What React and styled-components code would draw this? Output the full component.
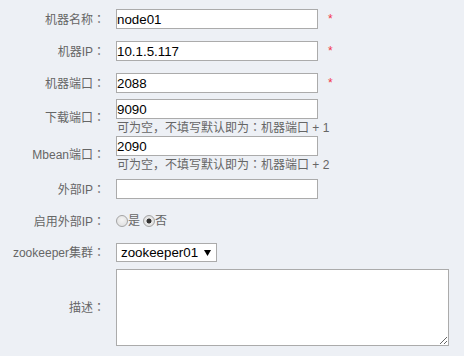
import React from "react";
import styled, { createGlobalStyle } from "styled-components";

const Global = createGlobalStyle`
  html, body { margin: 0; padding: 0; background: #edf0f5; }
  body { font-family: "Liberation Sans", "Noto Sans CJK SC", sans-serif; }
`;

const Form = styled.div`
  padding-top: 9px;
  width: 464px;
  height: 356px;
  box-sizing: border-box;
`;

const Row = styled.div`
  display: flex;
  align-items: center;
  margin-top: ${(p) => p.$mt || 0}px;
`;

const Label = styled.div`
  width: 105px;
  flex-shrink: 0;
  margin-right: 11px;
  text-align: right;
  font-size: 12px;
  line-height: 16px;
  color: #666;
  white-space: nowrap;
`;

const Colon = styled.span`
  font-family: "Noto Sans CJK JP", "Noto Sans CJK SC", sans-serif;
`;

const Field = styled.div`
  display: flex;
  flex-direction: column;
`;

const InputLine = styled.div`
  display: flex;
  align-items: center;
`;

const TextInput = styled.input`
  width: 202px;
  height: 20px;
  box-sizing: border-box;
  margin: 0;
  padding: 0 1px 0 0;
  border: 1px solid #ababab;
  background: #fff;
  color: #000;
  font-family: "Liberation Sans", Arial, sans-serif;
  font-size: 13.33px;
  outline: none;
`;

const Required = styled.span`
  margin-left: 10px;
  padding-bottom: 1px;
  color: #f2364a;
  font-size: 12px;
  line-height: 16px;
`;

const Hint = styled.div`
  font-size: 12px;
  line-height: 16px;
  color: #666;
  padding-left: 1px;
  white-space: nowrap;
`;

const Radios = styled.div`
  display: flex;
  align-items: center;
  height: 20px;
  font-size: 12px;
  color: #666;
`;

const Radio = styled.input.attrs({ type: "radio" })`
  appearance: none;
  -webkit-appearance: none;
  width: 12px;
  height: 12px;
  box-sizing: border-box;
  margin: 0 0 0 ${(p) => p.$ml || 0}px;
  border-radius: 50%;
  border: 1px solid #a4a4a4;
  background: radial-gradient(circle at 50% 40%, #f4f4f4 0%, #dcdcdc 100%);
  &:checked {
    background: radial-gradient(circle, #333 0, #333 2.2px, #e9e9e9 2.8px, #d6d6d6 100%);
  }
`;

const RadioText = styled.span`
  line-height: 16px;
`;

const SelectBox = styled.div`
  width: 101px;
  height: 19px;
  box-sizing: border-box;
  border: 1px solid #ababab;
  background: #fff;
  display: flex;
  align-items: center;
  justify-content: space-between;
  padding: 0 5px 0 4px;
  font-family: "Liberation Sans", Arial, sans-serif;
  font-size: 13.33px;
  color: #000;
`;

const TextArea = styled.textarea`
  width: 333px;
  height: 77px;
  box-sizing: border-box;
  margin: 0;
  padding: 0;
  border: 1px solid #ababab;
  background: #fff;
  font-family: "Liberation Sans", Arial, sans-serif;
  font-size: 13.33px;
  outline: none;
  display: block;
`;

function Arrow() {
  return (
    <svg width="7" height="6" viewBox="0 0 7 6">
      <polygon points="0,0 7,0 3.5,6" fill="#000" />
    </svg>
  );
}

const C = () => <Colon>：</Colon>;

export default function App() {
  return (
    <>
      <Global />
      <Form>
        <Row>
          <Label>机器名称<C /></Label>
          <InputLine>
            <TextInput defaultValue="node01" />
            <Required>*</Required>
          </InputLine>
        </Row>
        <Row $mt={12}>
          <Label>机器IP<C /></Label>
          <InputLine>
            <TextInput defaultValue="10.1.5.117" />
            <Required>*</Required>
          </InputLine>
        </Row>
        <Row $mt={12}>
          <Label>机器端口<C /></Label>
          <InputLine>
            <TextInput defaultValue="2088" />
            <Required>*</Required>
          </InputLine>
        </Row>
        <Row $mt={6}>
          <Label>下载端口<C /></Label>
          <Field>
            <TextInput defaultValue="9090" />
            <Hint>可为空，不填写默认即为<C />机器端口 + 1</Hint>
          </Field>
        </Row>
        <Row>
          <Label>Mbean端口<C /></Label>
          <Field>
            <TextInput defaultValue="2090" />
            <Hint>可为空，不填写默认即为<C />机器端口 + 2</Hint>
          </Field>
        </Row>
        <Row $mt={6}>
          <Label>外部IP<C /></Label>
          <TextInput defaultValue="" />
        </Row>
        <Row $mt={12}>
          <Label>启用外部IP<C /></Label>
          <Radios>
            <Radio name="ext" />
            <RadioText>是</RadioText>
            <Radio name="ext" $ml={3} defaultChecked />
            <RadioText>否</RadioText>
          </Radios>
        </Row>
        <Row $mt={12}>
          <Label>zookeeper集群<C /></Label>
          <SelectBox>
            <span>zookeeper01</span>
            <Arrow />
          </SelectBox>
        </Row>
        <Row $mt={7}>
          <Label>描述<C /></Label>
          <TextArea />
        </Row>
      </Form>
    </>
  );
}
